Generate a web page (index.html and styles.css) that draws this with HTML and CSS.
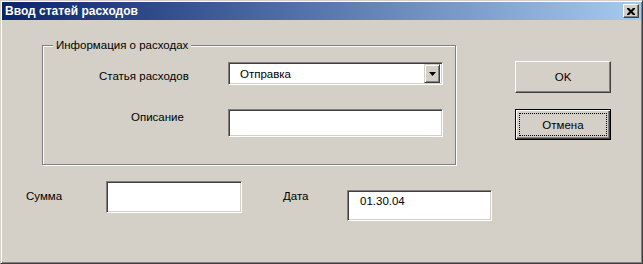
FILE: index.html
```html
<!DOCTYPE html>
<html lang="ru">
<head>
    <meta charset="UTF-8">
    <title>Ввод статей расходов</title>
    <link rel="stylesheet" href="styles.css">
</head>
<body>
    <div class="window">
        <div class="titlebar">
            <span class="title">Ввод статей расходов</span>
            <button class="close-btn" type="button">
                <svg width="8" height="7" viewBox="0 0 8 7">
                    <path d="M0 0h2l2 2 2-2h2v1l-2.5 2.5 2.5 2.5v1h-2l-2-2-2 2h-2v-1l2.5-2.5-2.5-2.5z" fill="#000"/>
                </svg>
            </button>
        </div>

        <div class="content">
            <div class="top-row">
                <fieldset class="group">
                    <legend>Информация о расходах</legend>
                    <div class="form-grid">
                        <label class="lbl lbl-item">Статья расходов</label>
                        <div class="combo">
                            <span class="combo-text">Отправка</span>
                            <span class="combo-arrow">
                                <svg width="7" height="4" viewBox="0 0 7 4"><path d="M0 0h7l-3.5 4z" fill="#000"/></svg>
                            </span>
                        </div>
                        <label class="lbl lbl-desc">Описание</label>
                        <div class="field field-desc"></div>
                    </div>
                </fieldset>

                <div class="buttons">
                    <button class="btn" type="button">OK</button>
                    <button class="btn btn-default" type="button"><span class="focus">Отмена</span></button>
                </div>
            </div>

            <div class="bottom-row">
                <label class="lbl lbl-sum">Сумма</label>
                <div class="field field-sum"></div>
                <label class="lbl lbl-date">Дата</label>
                <div class="field field-date">01.30.04</div>
            </div>
        </div>
    </div>
</body>
</html>
```

FILE: styles.css
```css
body {
    margin: 0;
    padding: 0;
    font-family: "Liberation Sans", Arial, sans-serif;
    font-size: 11.5px;
    color: #000;
    background-color: #d4d0c8;
}
.window {
    width: 643px;
    height: 264px;
    box-sizing: border-box;
    padding: 1px;
    background-color: #d4d0c8;
    border: 1px solid;
    border-color: #d4d0c8 #404040 #404040 #d4d0c8;
    box-shadow: inset 1px 1px #fff, inset -1px -1px #808080;
}
.titlebar {
    height: 18px;
    display: flex;
    align-items: center;
    justify-content: space-between;
    padding: 0 2px 0 3px;
    background: linear-gradient(to right, #0a246a, #a6caf0);
}
.title {
    color: #fff;
    font-weight: bold;
    font-size: 12px;
}
.close-btn {
    width: 16px;
    height: 14px;
    padding: 0;
    display: flex;
    align-items: center;
    justify-content: center;
    background-color: #d4d0c8;
    border: 1px solid;
    border-color: #fff #404040 #404040 #fff;
    box-shadow: inset -1px -1px #808080;
}
.content {
    padding: 0;
}
.top-row {
    display: flex;
    align-items: flex-start;
    margin: 18px 0 0 40px;
}
.group {
    width: 414px;
    height: 127px;
    box-sizing: border-box;
    margin: 0;
    padding: 0;
    border: 1px solid #808080;
    box-shadow: inset 1px 1px #fff, 1px 1px #fff;
}
.group legend {
    margin-left: 10px;
    padding: 0 3px;
    line-height: 14px;
    background-color: #d4d0c8;
}
.form-grid {
    display: grid;
    grid-template-columns: 185px 215px;
    row-gap: 24px;
    margin-top: 10px;
}
.lbl {
    line-height: 14px;
}
.lbl-item {
    padding-left: 56px;
    margin-top: 7px;
}
.lbl-desc {
    padding-left: 88px;
    margin-top: 1px;
}
.combo, .field {
    box-sizing: border-box;
    background-color: #fff;
    border: 1px solid;
    border-color: #808080 #fff #fff #808080;
    box-shadow: inset 1px 1px #404040, inset -1px -1px #d4d0c8;
}
.combo {
    height: 23px;
    padding: 2px;
    display: flex;
    align-items: center;
    justify-content: space-between;
}
.combo-text {
    padding-left: 9px;
}
.combo-arrow {
    width: 16px;
    height: 19px;
    box-sizing: border-box;
    display: flex;
    align-items: center;
    justify-content: center;
    background-color: #d4d0c8;
    border: 1px solid;
    border-color: #d4d0c8 #404040 #404040 #d4d0c8;
    box-shadow: inset 1px 1px #fff, inset -1px -1px #808080;
}
.field-desc {
    height: 28px;
}
.buttons {
    display: flex;
    flex-direction: column;
    gap: 16px;
    margin: 23px 0 0 59px;
}
.btn {
    width: 96px;
    height: 32px;
    padding: 0;
    font-family: inherit;
    font-size: 11.5px;
    color: #000;
    background-color: #d4d0c8;
    border: 1px solid;
    border-color: #fff #404040 #404040 #fff;
    box-shadow: inset -1px -1px #808080;
}
.btn-default {
    height: 31px;
    border: 1px solid #000;
    box-shadow: inset 1px 1px #fff, inset -1px -1px #404040, inset -2px -2px #808080;
    padding: 3px;
}
.btn-default .focus {
    display: flex;
    align-items: center;
    justify-content: center;
    height: 100%;
    border: 1px dotted #000;
    box-sizing: border-box;
}
.bottom-row {
    display: flex;
    align-items: flex-start;
    margin: 16px 0 0 24px;
}
.lbl-sum {
    width: 80px;
    margin-top: 8px;
}
.field-sum {
    width: 136px;
    height: 32px;
}
.lbl-date {
    width: 64px;
    margin: 8px 0 0 41px;
}
.field-date {
    width: 145px;
    height: 31px;
    margin-top: 9px;
    padding: 4px 0 0 12px;
}
```
